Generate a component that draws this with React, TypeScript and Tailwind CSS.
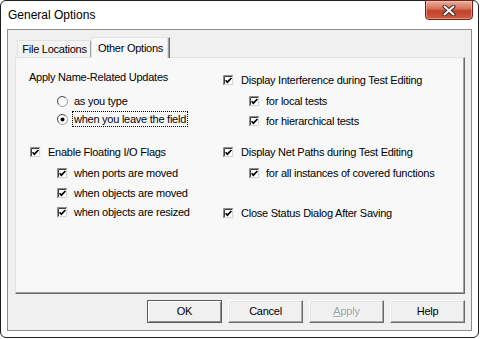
import React from "react";

const font = { fontFamily: '"Liberation Sans", Arial, sans-serif' };

function CheckBox() {
  return (
    <svg width="11" height="11" viewBox="0 0 11 11" className="shrink-0">
      <rect x="0" y="0" width="11" height="11" fill="#ffffff" />
      <path d="M0.5 10.5V0.5H10.5" stroke="#8d8d8d" fill="none" />
      <path d="M1.5 9.5V1.5H9.5" stroke="#3f3f3f" fill="none" />
      <path d="M10.5 0V10.5H0" stroke="#f2f2f2" fill="none" />
      <path d="M9.5 1V9.5H1" stroke="#d6d6d6" fill="none" />
      <path d="M2.6 5.2L4.4 7.2L8.4 3" stroke="#000" strokeWidth="1.7" fill="none" />
    </svg>
  );
}

function Radio({ on }: { on?: boolean }) {
  return (
    <svg width="11" height="11" viewBox="0 0 11 11" className="shrink-0">
      <circle cx="5.5" cy="5.5" r="5" fill="#ffffff" stroke="#9a9a9a" />
      <path d="M1.8 8.2A4.3 4.3 0 0 1 8.2 1.8" stroke="#5a5a5a" fill="none" />
      {on && <circle cx="5.5" cy="5.5" r="2" fill="#000" />}
    </svg>
  );
}

function Check({ label, sub, className = "" }: { label: string; sub?: boolean; className?: string }) {
  return (
    <div className={`flex h-[18px] items-center ${sub ? "ml-[28px] gap-[6px]" : "ml-[1px] gap-[7px]"} ${className}`}>
      <CheckBox />
      <span>{label}</span>
    </div>
  );
}

function Button({ children, def, disabled }: { children: React.ReactNode; def?: boolean; disabled?: boolean }) {
  return (
    <div
      className={`flex h-[23px] w-[75px] items-center justify-center bg-[#f0f0f0] ${
        def
          ? "border border-[#5a5a5a] shadow-[inset_1px_1px_0_#ffffff,inset_-1px_-1px_0_#8a8a8a]"
          : "border-t border-l border-t-[#fcfcfc] border-l-[#fcfcfc] border-r border-b border-r-[#696969] border-b-[#696969] shadow-[inset_-1px_-1px_0_#a8a8a8,inset_1px_1px_0_#e6e6e6]"
      } ${disabled ? "text-[#a0a0a0] [text-shadow:1px_1px_0_#ffffff]" : "text-black"}`}
    >
      {children}
    </div>
  );
}

export default function App() {
  return (
    <div className="h-[339px] w-[480px] bg-white" style={font}>
      <div className="flex h-[338px] w-[479px] flex-col rounded-[6px] border border-[#1e1e1e] bg-white">
        {/* title bar */}
        <div className="flex h-[28px] shrink-0 items-start justify-between">
          <div className="pl-[7px] pt-[6px] text-[12px] leading-[16px] text-black">General Options</div>
          <div className="-mt-[1px] mr-[5px] flex h-[20px] w-[48px] items-center justify-center rounded-b-[4px] border border-[#6e2418] bg-[linear-gradient(to_bottom,#eab0a0,#d8735c_42%,#c3412a_55%,#cf5d43)] shadow-[inset_0_0_0_1px_rgba(255,210,200,0.45)]">
            <svg width="14" height="11" viewBox="0 0 14 11">
              <path d="M2.5 1.5L11.5 9.5M11.5 1.5L2.5 9.5" stroke="#3a2a28" strokeWidth="4" strokeLinecap="round" />
              <path d="M2.5 1.5L11.5 9.5M11.5 1.5L2.5 9.5" stroke="#ffffff" strokeWidth="2" strokeLinecap="round" />
            </svg>
          </div>
        </div>

        {/* client area */}
        <div className="mx-[6px] flex h-[302px] flex-col border border-[#8c8c8c] bg-[#f0f0f0] px-[7px] pt-[7px] text-[11px] tracking-[-0.25px] text-black">
          {/* tabs */}
          <div className="flex h-[20px] items-end">
            <div className="ml-[2px] flex h-[17px] w-[74px] items-center justify-center border-t border-l border-[#e2e2e2] bg-[#f3f3f3] pt-[1px] shadow-[inset_-1px_0_0_#a0a0a0]">
              File Locations
            </div>
            <div className="relative z-10 -mb-[1px] flex h-[21px] w-[79px] items-start justify-center border-t border-l border-[#e2e2e2] bg-[#f8f8f8] pt-[2px] shadow-[inset_-1px_0_0_#a0a0a0,inset_-2px_0_0_#e0e0e0] [border-right:1px_solid_#696969]">
              Other Options
            </div>
          </div>

          {/* panel */}
          <div className="flex h-[237px] w-[450px] border-t border-l border-[#e2e2e2] bg-[#f8f8f8] pl-[13px] pt-[10px] [border-right:1px_solid_#696969] [border-bottom:1px_solid_#696969] shadow-[inset_-1px_-1px_0_#a0a0a0]">
            <div className="flex w-[193px] flex-col">
              <div className="flex h-[18px] items-center">Apply Name-Related Updates</div>
              <div className="ml-[28px] mt-[6px] flex h-[18px] items-center gap-[5px]">
                <Radio />
                <span className="px-[1px]">as you type</span>
              </div>
              <div className="ml-[28px] flex h-[18px] items-center gap-[5px]">
                <Radio on />
                <span className="px-[1px] leading-[14px] outline-1 outline-dotted outline-black">when you leave the field</span>
              </div>
              <Check label="Enable Floating I/O Flags" className="mt-[15px]" />
              <Check label="when ports are moved" sub className="mt-[3px]" />
              <Check label="when objects are moved" sub className="mt-[2px]" />
              <Check label="when objects are resized" sub className="mt-[1px]" />
            </div>
            <div className="flex flex-col">
              <Check label="Display Interference during Test Editing" className="mt-[3px]" />
              <Check label="for local tests" sub className="mt-[3px] !ml-[27px]" />
              <Check label="for hierarchical tests" sub className="mt-[2px] !ml-[27px]" />
              <Check label="Display Net Paths during Test Editing" className="mt-[13px]" />
              <Check label="for all instances of covered functions" sub className="mt-[3px] !ml-[27px]" />
              <Check label="Close Status Dialog After Saving" className="mt-[22px]" />
            </div>
          </div>

          {/* buttons */}
          <div className="-mr-[1px] mt-[6px] flex justify-end gap-[6px]">
            <Button def>OK</Button>
            <Button>Cancel</Button>
            <Button disabled>
              <span>
                <span className="underline">A</span>pply
              </span>
            </Button>
            <Button>Help</Button>
          </div>
        </div>
      </div>
    </div>
  );
}
